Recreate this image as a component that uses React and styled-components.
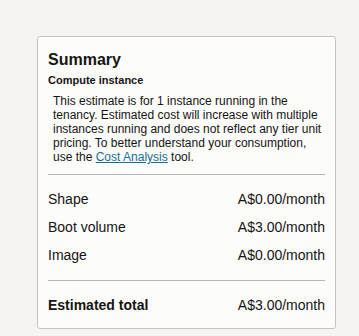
import styled, { createGlobalStyle } from "styled-components";

const GlobalStyle = createGlobalStyle`
  body {
    margin: 0;
    background: #f5f4f2;
    font-family: "Liberation Sans", Arial, sans-serif;
    color: #161513;
  }
`;

const Page = styled.div`
  padding: 36px 0 0 37px;
`;

const Card = styled.section`
  box-sizing: border-box;
  width: 299px;
  height: 293px;
  padding: 13px 10px 9px 10px;
  background: #fcfcfb;
  border: 1px solid #c6c3bf;
  border-radius: 3px;
`;

const Title = styled.h2`
  margin: 0;
  font-size: 16px;
  line-height: 20px;
  font-weight: bold;
`;

const Subtitle = styled.h3`
  margin: 3px 0 0;
  font-size: 11px;
  line-height: 14px;
  font-weight: bold;
`;

const Note = styled.p`
  margin: 7px 0 0;
  padding: 0 0 0 5px;
  font-size: 12px;
  line-height: 14px;
`;

const Link = styled.a`
  color: #176f8f;
  text-decoration: underline;
`;

const Divider = styled.hr`
  margin: ${(p) => p.$top}px 0 ${(p) => p.$bottom}px;
  border: none;
  border-top: 1px solid #b9b6b1;
`;

const Row = styled.div`
  display: flex;
  justify-content: space-between;
  padding: 6px 0;
  font-size: 14px;
  line-height: 16px;
  font-weight: ${(p) => (p.$total ? "bold" : "normal")};
`;

const Value = styled.span`
  font-weight: normal;
`;

const lines = [
  ["Shape", "A$0.00/month"],
  ["Boot volume", "A$3.00/month"],
  ["Image", "A$0.00/month"],
];

export default function App() {
  return (
    <Page>
      <GlobalStyle />
      <Card>
        <Title>Summary</Title>
        <Subtitle>Compute instance</Subtitle>
        <Note>
          This estimate is for 1 instance running in the tenancy. Estimated
          cost will increase with multiple instances running and does not
          reflect any tier unit pricing. To better understand your
          consumption, use the <Link href="#">Cost Analysis</Link> tool.
        </Note>
        <Divider $top={10} $bottom={10} />
        {lines.map(([label, value]) => (
          <Row key={label}>
            <span>{label}</span>
            <Value>{value}</Value>
          </Row>
        ))}
        <Divider $top={11} $bottom={10} />
        <Row $total>
          <span>Estimated total</span>
          <Value>A$3.00/month</Value>
        </Row>
      </Card>
    </Page>
  );
}
